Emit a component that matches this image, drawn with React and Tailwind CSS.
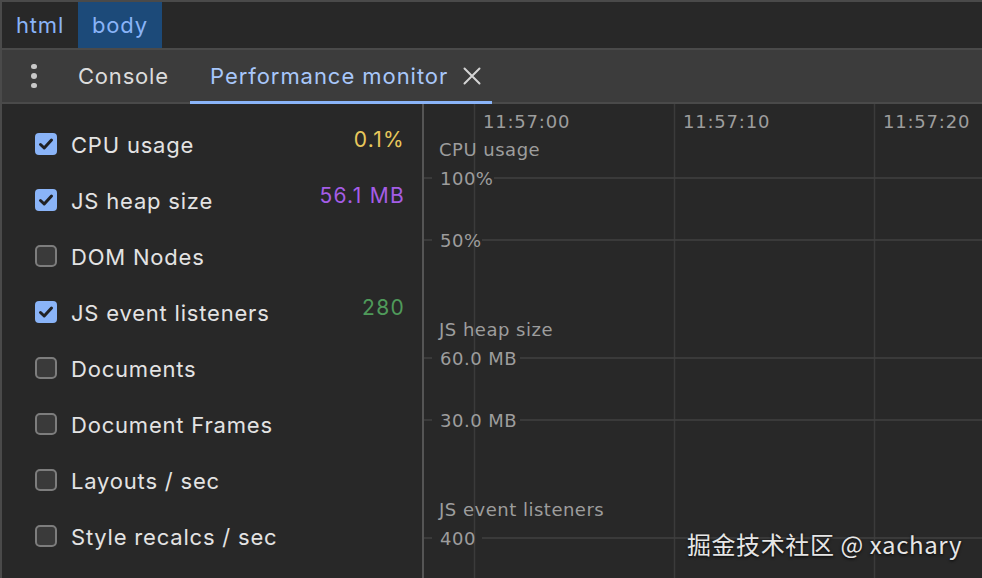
import React from "react";

const ui = { fontFamily: "Inter, 'Noto Sans', sans-serif" };
const chartFont = "'DejaVu Sans', sans-serif";

const rows = [
  { label: "CPU usage", checked: true, value: "0.1%", color: "text-[#e9c85c]" },
  { label: "JS heap size", checked: true, value: "56.1 MB", color: "text-[#a55de6]" },
  { label: "DOM Nodes", checked: false },
  { label: "JS event listeners", checked: true, value: "280", color: "text-[#4f9a5a]" },
  { label: "Documents", checked: false },
  { label: "Document Frames", checked: false },
  { label: "Layouts / sec", checked: false },
  { label: "Style recalcs / sec", checked: false },
];

function Checkbox({ checked }) {
  if (checked) {
    return (
      <div className="w-[22px] h-[22px] rounded-[4px] bg-[#8ab4f8] flex items-center justify-center shrink-0">
        <svg width="22" height="22" viewBox="0 0 22 22">
          <path d="M5.5 11.5 L9.2 15 L16.5 7" fill="none" stroke="#202124" strokeWidth="3" strokeLinecap="round" strokeLinejoin="round" />
        </svg>
      </div>
    );
  }
  return <div className="w-[22px] h-[22px] rounded-[5px] border-2 border-[#7d7d7d] bg-[#3a3a3a] shrink-0" />;
}

function Chart() {
  const grid = "#414141";
  const vgrid = "#3b3b3b";
  const txt = "#9d9d9d";
  const hLines = [
    { y: 74, from: 70, label: "100%" },
    { y: 136, from: 58, label: "50%" },
    { y: 254, from: 96, label: "60.0 MB" },
    { y: 316, from: 96, label: "30.0 MB" },
    { y: 434, from: 58, label: "400" },
  ];
  const titles = [
    { y: 45, label: "CPU usage" },
    { y: 225, label: "JS heap size" },
    { y: 405, label: "JS event listeners" },
  ];
  const times = [
    { x: 59, label: "11:57:00" },
    { x: 259, label: "11:57:10" },
    { x: 459, label: "11:57:20" },
  ];
  const common = { dominantBaseline: "central", fill: txt, fontSize: "18", fontFamily: chartFont, letterSpacing: "0.5" };
  return (
    <svg width="558" height="474" viewBox="0 0 558 474" className="block">
      {[50, 250, 450].map((x) => (
        <line key={x} x1={x + 0.5} y1="0" x2={x + 0.5} y2="474" stroke={vgrid} strokeWidth="1.5" />
      ))}
      {hLines.map((l) => (
        <g key={l.label}>
          <line x1="0" y1={l.y} x2="8" y2={l.y} stroke={grid} strokeWidth="1.5" />
          <line x1={l.from} y1={l.y} x2="558" y2={l.y} stroke={grid} strokeWidth="1.5" />
          <text x="16" y={l.y} {...common}>
            {l.label}
          </text>
        </g>
      ))}
      {titles.map((t) => (
        <text key={t.label} x="15" y={t.y} {...common}>
          {t.label}
        </text>
      ))}
      {times.map((t) => (
        <text key={t.label} x={t.x} y="17" {...common} letterSpacing="0.8">
          {t.label}
        </text>
      ))}
    </svg>
  );
}

export default function App() {
  return (
    <div style={ui} className="w-[982px] h-[578px] bg-[#282828] overflow-hidden border-t-2 border-l-2 border-[#4a4a4a] flex flex-col">
      {/* breadcrumb bar */}
      <div className="h-[48px] shrink-0 flex items-stretch border-b-2 border-[#4a4a4a] bg-[#282828] text-[22px] tracking-[0.8px] text-[#8ab4f8]">
        <div className="px-[14px] flex items-center">html</div>
        <div className="px-[14px] flex items-center bg-[#1c4a79]">body</div>
      </div>

      {/* tab bar */}
      <div className="h-[54px] shrink-0 flex items-stretch bg-[#3c3c3c] border-b-2 border-[#4a4a4a] text-[22px] tracking-[0.8px]">
        <div className="w-[56px] pl-[8px] flex items-center justify-center">
          <div className="flex flex-col gap-[4px]">
            <div className="w-[5.5px] h-[5.5px] rounded-full bg-[#c8c8c8]" />
            <div className="w-[5.5px] h-[5.5px] rounded-full bg-[#c8c8c8]" />
            <div className="w-[5.5px] h-[5.5px] rounded-full bg-[#c8c8c8]" />
          </div>
        </div>
        <div className="w-[132px] pl-[20px] flex items-center text-[#dcdcdc]">Console</div>
        <div className="relative w-[302px] pl-[20px] pr-[11px] flex items-center text-[#a8c7fa]">
          <span className="tracking-[0.95px]">Performance monitor</span>
          <svg className="ml-auto" width="18" height="18" viewBox="0 0 18 18">
            <path d="M1.5 1.5 L16.5 16.5 M16.5 1.5 L1.5 16.5" stroke="#d4d4d4" strokeWidth="2" strokeLinecap="round" />
          </svg>
          <div className="absolute left-0 right-0 bottom-[-2px] h-[3px] bg-[#8ab4f8]" />
        </div>
      </div>

      {/* body */}
      <div className="flex-1 flex min-h-0 relative">
        <div className="w-[422px] shrink-0 border-r-2 border-[#555555] pt-[12px] pl-[33px] pr-[17px]">
          {rows.map((r) => (
            <div key={r.label} className="h-[56px] flex items-center">
              <Checkbox checked={r.checked} />
              <span className="ml-[14px] text-[22px] tracking-[0.8px] text-[#e3e3e3] translate-y-[1px]">{r.label}</span>
              {r.value && (
                <span className={`ml-auto text-[21px] tracking-[1.3px] -translate-y-[4px] ${r.color}`}>{r.value}</span>
              )}
            </div>
          ))}
        </div>
        <div className="flex-1 min-w-0 bg-[#282828]">
          <Chart />
        </div>
        <div
          className="absolute right-[20px] bottom-[16px] text-[24px] tracking-[0.6px] text-[#e6e6e6] [text-shadow:0_1px_3px_rgba(0,0,0,0.9)]"
          style={{ fontFamily: "'Noto Sans CJK SC', 'Noto Sans', sans-serif" }}
        >
          掘金技术社区 @ xachary
        </div>
      </div>
    </div>
  );
}
